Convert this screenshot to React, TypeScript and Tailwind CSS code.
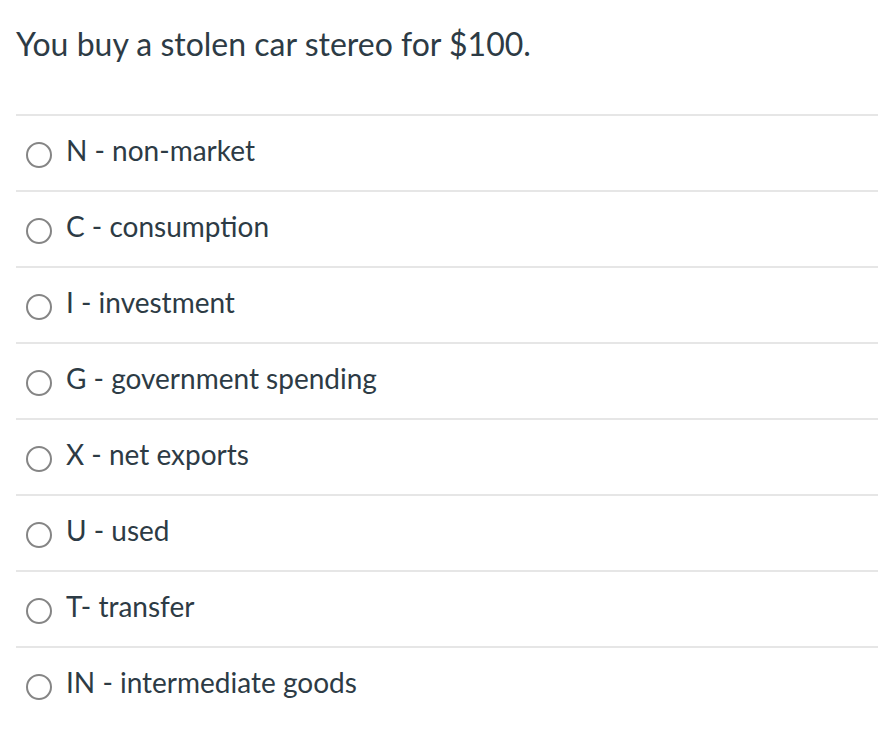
import React from "react";

const options = [
  "N - non-market",
  "C - consumption",
  "I - investment",
  "G - government spending",
  "X - net exports",
  "U - used",
  "T- transfer",
  "IN - intermediate goods",
];

export default function App() {
  return (
    <div className="w-[878px] h-[732px] bg-white pl-4 text-[#2d3b45]" style={{ fontFamily: "Lato, 'Noto Sans', sans-serif" }}>
      <div className="h-[114px] pt-[22px]">
        <h1 className="text-[32px] leading-[44px] font-normal">You buy a stolen car stereo for $100.</h1>
      </div>
      <div>
        {options.map((o) => (
          <label key={o} className="flex items-center h-[76px] border-t-2 border-[#e6e6e6] pl-[10px]">
            <span className="w-[26px] h-[26px] mt-[3px] rounded-full border-2 border-[#858585] shrink-0" />
            <span className="ml-[14px] text-[28px] leading-none pb-[6px]">{o}</span>
          </label>
        ))}
      </div>
    </div>
  );
}
